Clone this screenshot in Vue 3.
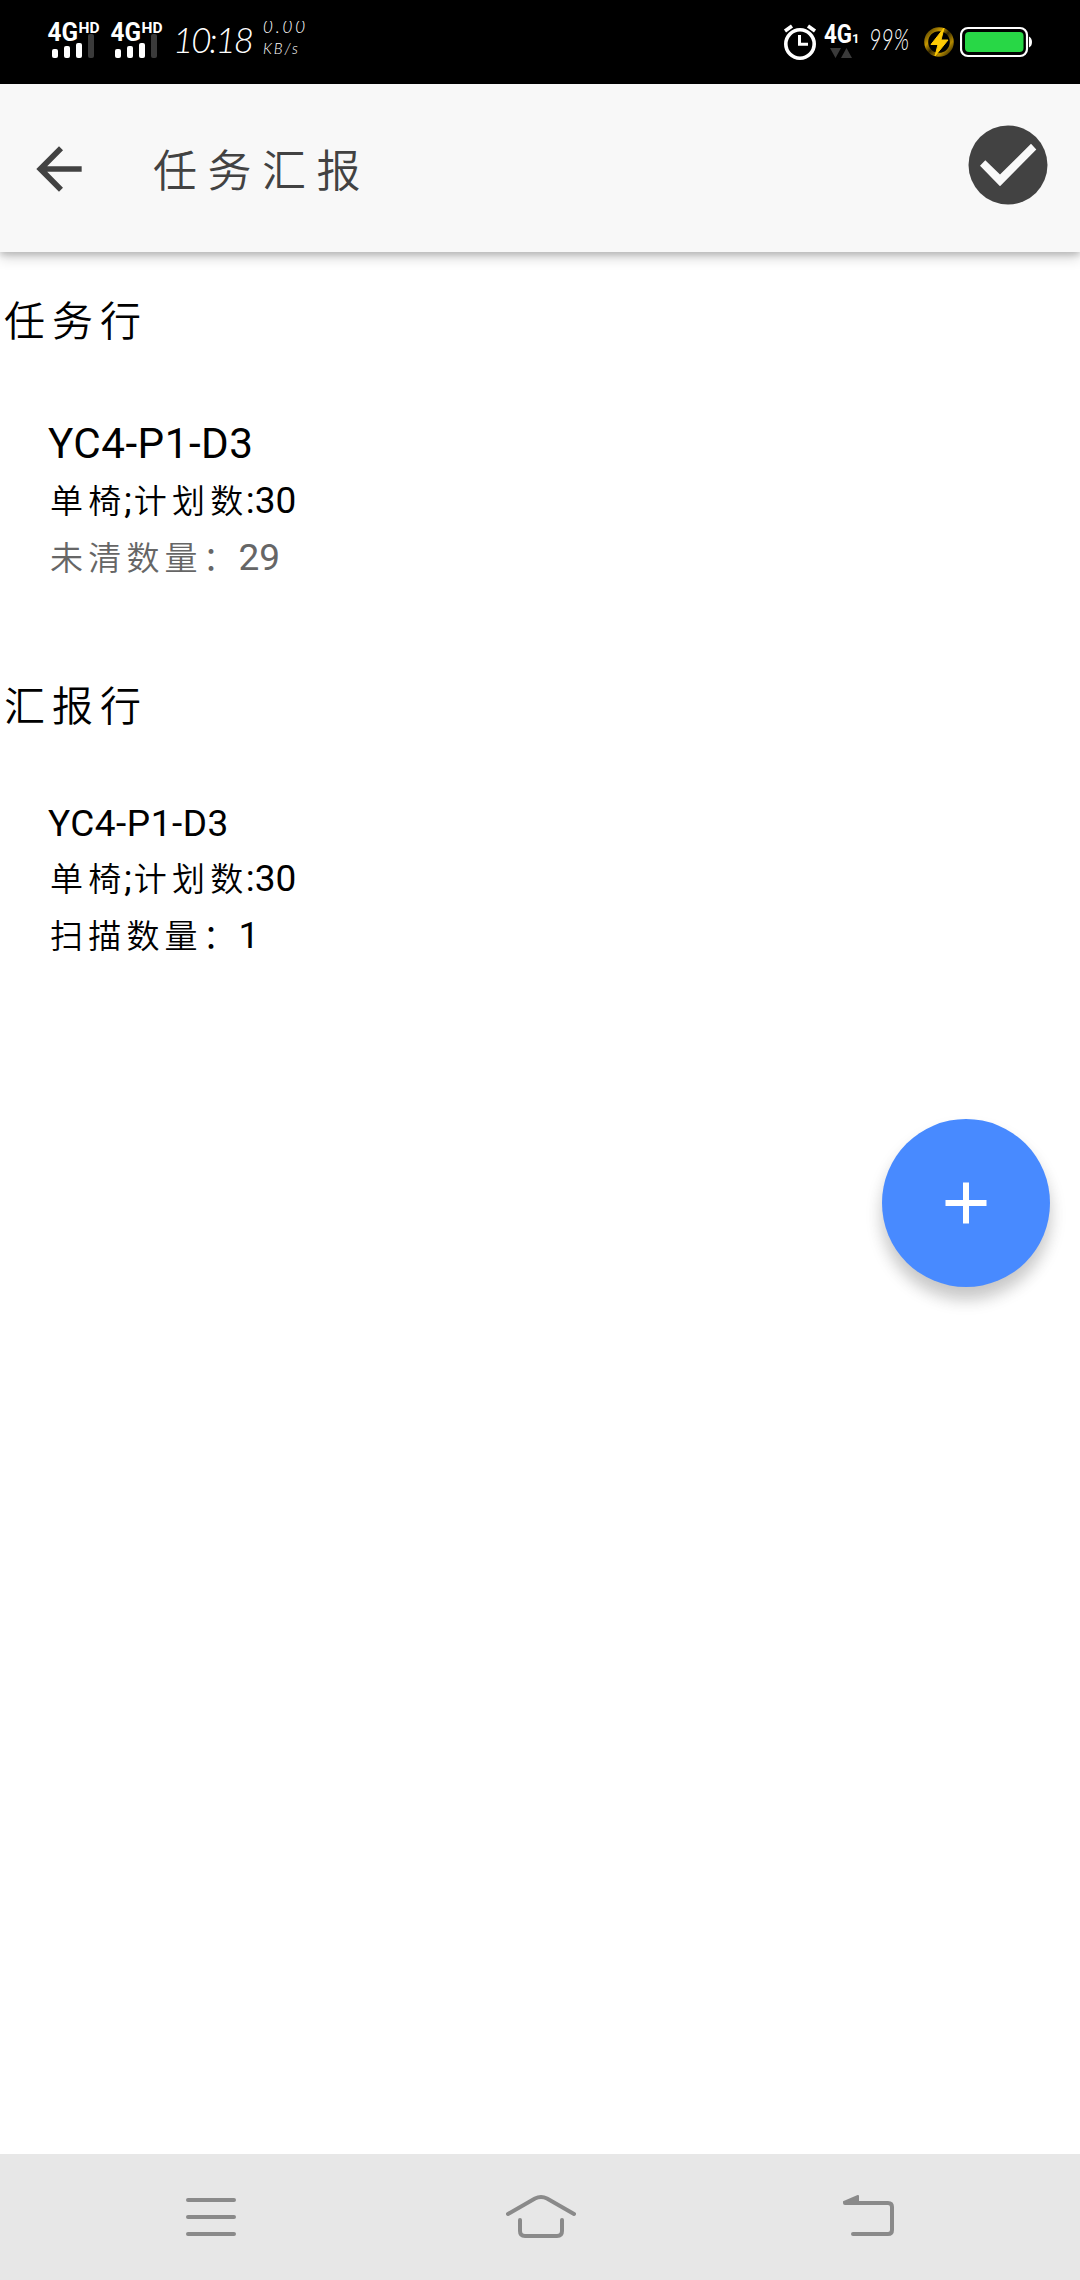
<script setup>
const sims = [1, 2]

const taskRow = {
  code: 'YC4-P1-D3',
  name: '单椅',
  planLabel: '计划数',
  plan: 30,
  countLabel: '未清数量：',
  count: 29
}

const reportRow = {
  code: 'YC4-P1-D3',
  name: '单椅',
  planLabel: '计划数',
  plan: 30,
  countLabel: '扫描数量：',
  count: 1
}
</script>

<template>
  <div class="screen">
    <div class="status">
      <svg v-for="s in sims" :key="s" class="sim" width="53" height="84" viewBox="0 0 53 84">
        <text class="net" x="-.5" y="41" font-size="25" textLength="30.500" lengthAdjust="spacingAndGlyphs">4G</text>
        <text class="net" x="30.500" y="33" font-size="14" textLength="21" lengthAdjust="spacingAndGlyphs">HD</text>
        <rect x="4" y="49" width="6" height="9" rx="2" fill="#fff" />
        <rect x="16" y="46" width="6" height="12" rx="2" fill="#fff" />
        <rect x="28" y="43" width="6" height="15" rx="2" fill="#fff" />
        <rect x="40" y="34" width="6" height="24" rx="2" fill="#3a3a3a" />
      </svg>
      <svg class="clock" width="80" height="84" viewBox="0 0 80 84">
        <text class="hand" x="-2" y="52.500" font-size="35" textLength="81" lengthAdjust="spacing">10:18</text>
      </svg>
      <svg class="speed" width="46" height="84" viewBox="0 0 46 84">
        <svg y="21" width="46" height="14" viewBox="0 21 46 14">
          <text class="hand" x="0" y="33" font-size="17" textLength="42" lengthAdjust="spacing">0.00</text>
        </svg>
        <text class="hand" x="0" y="54" font-size="15" textLength="35" lengthAdjust="spacing">KB/s</text>
      </svg>
      <div class="grow"></div>
      <svg width="34" height="84" viewBox="783 0 34 84" fill="none" stroke="#fff">
        <circle cx="800" cy="44" r="14.2" stroke-width="3.6" />
        <path d="M799.5 35v9.3h8.5" stroke-width="3" />
        <path d="M785 31l7-5M815 31l-7-5" stroke-width="3.6" />
      </svg>
      <svg class="cell" width="36" height="84" viewBox="823 0 36 84">
        <text class="net" x="824" y="43" font-size="25" textLength="28" lengthAdjust="spacingAndGlyphs">4G</text>
        <text class="net" x="852" y="43" font-size="13">1</text>
        <path d="M830 48h11l-5.500 10zM841 58h11l-5.500-10z" fill="#3a3a3a" />
      </svg>
      <svg class="pct" width="46" height="84" viewBox="0 0 46 84">
        <text class="hand" x="0" y="50" font-size="29" textLength="40" lengthAdjust="spacingAndGlyphs">99%</text>
      </svg>
      <svg class="charge" width="32" height="84" viewBox="923 0 32 84">
        <defs>
          <linearGradient id="ring" x1="0" y1="0" x2="1" y2="1">
            <stop offset="0" stop-color="#4a3a00" />
            <stop offset=".3" stop-color="#c69700" />
            <stop offset=".5" stop-color="#3a2c00" />
            <stop offset=".75" stop-color="#b48a00" />
            <stop offset="1" stop-color="#2a2000" />
          </linearGradient>
        </defs>
        <circle cx="939" cy="42" r="12.800" fill="none" stroke="url(#ring)" stroke-width="4" />
        <path d="M944 28L931 44.500h7L935 56l13-16h-7z" fill="#ffcb05" stroke="#ffcb05" stroke-width="1" stroke-linejoin="round" />
      </svg>
      <svg class="battery" width="73" height="84" viewBox="960 0 73 84">
        <rect x="961" y="28" width="66" height="28" rx="7" fill="none" stroke="#fff" stroke-width="2.200" />
        <rect x="965" y="32" width="58.500" height="20" rx="4" fill="#28d746" />
        <path d="M1029 36.500q3 1.500 3 5.500t-3 5.500z" fill="#fff" />
      </svg>
    </div>

    <header class="bar">
      <svg class="back" width="68" height="68" viewBox="0 0 24 24">
        <path d="M20 11H7.830l5.590-5.590L12 4l-8 8 8 8 1.410-1.410L7.830 13H20v-2z" fill="#424242" />
      </svg>
      <h1>任务汇报</h1>
      <svg class="done" width="80" height="80" viewBox="0 0 80 80">
        <circle cx="40" cy="40" r="39.500" fill="#424242" />
        <path d="M12 40.800L17.300 35.200 32 49.500 63 18.800 68.300 24.500 32 61.200z" fill="#f8f8f8" />
      </svg>
    </header>

    <main>
      <h2>任务行</h2>
      <section class="item first">
        <p class="code large">{{ taskRow.code }}</p>
        <p><span>{{ taskRow.name }}</span>;<span>{{ taskRow.planLabel }}</span>:{{ taskRow.plan }}</p>
        <p class="muted"><span>{{ taskRow.countLabel }}</span>{{ taskRow.count }}</p>
      </section>
      <h2>汇报行</h2>
      <section class="item second">
        <p class="code">{{ reportRow.code }}</p>
        <p><span>{{ reportRow.name }}</span>;<span>{{ reportRow.planLabel }}</span>:{{ reportRow.plan }}</p>
        <p><span>{{ reportRow.countLabel }}</span>{{ reportRow.count }}</p>
      </section>
      <button class="fab" aria-label="add">
        <svg width="42" height="42" viewBox="0 0 42 42">
          <path d="M21 .5v41M.5 21h41" stroke="#fff" stroke-width="6" />
        </svg>
      </button>
    </main>

    <nav>
      <svg width="50" height="44" viewBox="0 0 50 44">
        <path d="M2 6h46M2 23h46M2 40h46" />
      </svg>
      <svg class="home" width="70" height="44" viewBox="0 0 70 44">
        <path d="M2 20L29 4.500q6-3 12 0L68 20M14 26v11q0 5 5 5h32q5 0 5-5V26" />
      </svg>
      <svg class="return" width="52" height="44" viewBox="0 0 52 44">
        <path d="M2 9h43q4 0 4 4v23q0 4-4 4H10" />
        <path class="tip" d="M1 8L15 2V9H2z" />
      </svg>
    </nav>
  </div>
</template>

<style>
body {
  background: #fff;
}
</style>

<style scoped>
.screen {
  width: 1080px;
  height: 2280px;
  display: flex;
  flex-direction: column;
  background: #fff;
  font-family: Roboto, "Noto Sans CJK SC", sans-serif;
  overflow: hidden;
}
svg {
  display: block;
  flex: none;
}
.status {
  height: 84px;
  flex: none;
  display: flex;
  background: #000;
  padding: 0 47px 0 48px;
}
.sim {
  margin-right: 10px;
  overflow: visible;
}
.clock {
  margin-left: 1px;
  overflow: visible;
}
.speed {
  margin-left: 8px;
}
.grow {
  flex: 1;
}
.cell {
  margin-left: 6px;
}
.pct {
  margin-left: 10px;
  overflow: visible;
}
.charge {
  margin-left: 8px;
}
.battery {
  margin-left: 5px;
}
.net {
  font-family: Roboto, sans-serif;
  font-weight: 700;
  fill: #fff;
}
.hand {
  font-family: Lato, sans-serif;
  font-style: italic;
  font-weight: 300;
  fill: #fff;
}
.bar {
  height: 168px;
  flex: none;
  box-sizing: border-box;
  display: flex;
  align-items: center;
  padding: 2px 32px 0 25px;
  background: #f8f8f8;
  box-shadow: 0 3px 6px rgba(0, 0, 0, .16), 0 6px 12px rgba(0, 0, 0, .16);
}
h1 {
  margin: 5px 0 0 60px;
  flex: 1;
  font-size: 44px;
  font-weight: 350;
  line-height: 60px;
  letter-spacing: 10.500px;
  color: #424242;
}
.done {
  margin-top: -9px;
}
main {
  flex: 1;
  display: flex;
  flex-direction: column;
}
h2 {
  margin: 40px 0 0 4px;
  font-size: 41px;
  font-weight: 350;
  line-height: 60px;
  letter-spacing: 7px;
  color: #000;
}
.item {
  padding-left: 48px;
  font-size: 37px;
  color: #000;
}
.item p {
  margin: 0;
  line-height: 57px;
  white-space: pre;
}
.item span {
  font-size: 33px;
  font-weight: 350;
  line-height: 0;
  letter-spacing: 5.200px;
  margin: 0 -2.500px 0 2px;
}
.item .code {
  letter-spacing: .5px;
}
.first {
  padding-top: 64px;
  padding-bottom: 51px;
}
.item .large {
  font-size: 42.200px;
  line-height: 56px;
}
.second {
  padding-top: 61px;
}
.second .code {
  line-height: 52px;
}
.item .muted {
  color: #666;
}
.fab {
  align-self: flex-end;
  display: flex;
  align-items: center;
  justify-content: center;
  width: 168px;
  height: 168px;
  margin: 155px 30px 0 0;
  padding: 0;
  border: 0;
  border-radius: 50%;
  background: #488aff;
  box-shadow: 0 12px 18px rgba(0, 0, 0, .14), 0 12px 15px rgba(0, 0, 0, .1);
}
nav {
  height: 126px;
  flex: none;
  box-sizing: border-box;
  display: flex;
  padding: 40px 0 0 186px;
  background: #e7e7e7;
}
nav path {
  fill: none;
  stroke: #8a8a8a;
  stroke-width: 4;
  stroke-linecap: round;
  stroke-linejoin: round;
}
nav .tip {
  fill: #8a8a8a;
  stroke-width: 2;
}
.home {
  margin-left: 270px;
}
.return {
  margin-left: 267px;
}
</style>
